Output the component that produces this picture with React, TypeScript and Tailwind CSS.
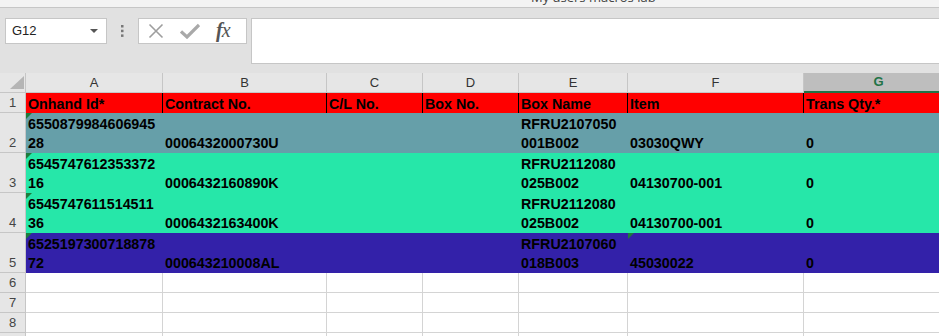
import React from 'react'

// column widths in px, right gridline included
const COLS = [
  { key: 'A', w: 137 },
  { key: 'B', w: 164 },
  { key: 'C', w: 96 },
  { key: 'D', w: 96 },
  { key: 'E', w: 109 },
  { key: 'F', w: 176 },
  { key: 'G', w: 161 },
]

const HEADERS = ['Onhand Id*', 'Contract No.', 'C/L No.', 'Box No.', 'Box Name', 'Item', 'Trans Qty.*']

type Row = { n: number; bg: string; cells: [string, string][]; flags: number[] }

const ROWS: Row[] = [
  {
    n: 2,
    bg: 'bg-[#669fa9]',
    cells: [['6550879984606945', '28'], ['', '0006432000730U'], ['', ''], ['', ''], ['RFRU2107050', '001B002'], ['', '03030QWY'], ['', '0']],
    flags: [0],
  },
  {
    n: 3,
    bg: 'bg-[#26e7a9]',
    cells: [['6545747612353372', '16'], ['', '0006432160890K'], ['', ''], ['', ''], ['RFRU2112080', '025B002'], ['', '04130700-001'], ['', '0']],
    flags: [0],
  },
  {
    n: 4,
    bg: 'bg-[#26e7a9]',
    cells: [['6545747611514511', '36'], ['', '0006432163400K'], ['', ''], ['', ''], ['RFRU2112080', '025B002'], ['', '04130700-001'], ['', '0']],
    flags: [0],
  },
  {
    n: 5,
    bg: 'bg-[#3321a9]',
    cells: [['6525197300718878', '72'], ['', '000643210008AL'], ['', ''], ['', ''], ['RFRU2107060', '018B003'], ['', '45030022'], ['', '0']],
    flags: [0, 5],
  },
]

function Flag() {
  return (
    <svg width="6" height="6" className="absolute left-0 top-0">
      <polygon points="0,0 6,0 0,6" fill="#1e7b3c" />
    </svg>
  )
}

function RowHead({ n, h }: { n: number | string; h: string }) {
  return (
    <div className={`w-[26px] ${h} shrink-0 bg-[#e6e6e6] border-r border-b border-[#c6c6c6] flex items-end justify-center pb-[1px] text-[13px] leading-[16px] text-[#444]`}>
      {n}
    </div>
  )
}

export default function App() {
  return (
    <div className="w-[939px] h-[336px] overflow-hidden bg-[#e1e1e1] font-['Liberation_Sans',Arial,sans-serif]">
      {/* title strip */}
      <div className="h-[8px] bg-[#f3f3f3] border-b border-[#c6c6c6] overflow-hidden relative">
        <span className="absolute left-[531px] top-[-10px] text-[13px] leading-[14px] text-[#444] font-['Open_Sans',sans-serif]">
          My users macros lab
        </span>
      </div>

      {/* formula bar */}
      <div className="h-[65px] flex items-start pt-[10px]">
        <div className="ml-[5px] w-[102px] h-[26px] bg-white border border-[#c6c6c6] flex items-center justify-between pl-[6px] pr-[8px] text-[13px] text-[#222]">
          <span>G12</span>
          <svg width="8" height="5" viewBox="0 0 8 5">
            <polygon points="0,0 8,0 4,4" fill="#555" />
          </svg>
        </div>
        <div className="w-[31px] h-[26px] flex items-center justify-center">
          <svg width="3" height="12" viewBox="0 0 3 12">
            <rect x="0" y="0" width="2.5" height="2.5" fill="#777" />
            <rect x="0" y="4.7" width="2.5" height="2.5" fill="#777" />
            <rect x="0" y="9.4" width="2.5" height="2.5" fill="#777" />
          </svg>
        </div>
        <div className="w-[109px] h-[26px] bg-white border border-[#c6c6c6] flex items-center pl-[9px] gap-[16px]">
          <svg width="16" height="16" viewBox="0 0 16 16">
            <path d="M1.5 1.5 L14.5 14.5 M14.5 1.5 L1.5 14.5" stroke="#9e9e9e" strokeWidth="1.6" fill="none" />
          </svg>
          <svg width="20" height="16" viewBox="0 0 20 16">
            <path d="M1 8.5 L7 14 L19 2" stroke="#a9a9a9" strokeWidth="3.2" fill="none" />
          </svg>
          <span className="text-[20px] leading-[20px] italic text-[#555] font-['Liberation_Serif',serif] tracking-[-1px] -mt-[2px]">
            <span className="font-bold">f</span>x
          </span>
        </div>
        <div className="ml-[4px] flex-1 h-[46px] bg-white border border-[#c6c6c6] border-r-0" />
      </div>

      {/* column headers */}
      <div className="flex h-[20px]">
        <div className="w-[26px] h-[20px] shrink-0 bg-[#e6e6e6] border-r border-b border-[#c6c6c6] relative">
          <svg width="14" height="14" className="absolute left-[10px] top-[3px]">
            <polygon points="14,0 14,13 0,13" fill="#b5b5b5" />
          </svg>
        </div>
        {COLS.map((c) =>
          c.key === 'G' ? (
            <div
              key={c.key}
              style={{ width: c.w }}
              className="h-[20px] shrink-0 bg-[#bebebe] border-b-2 border-[#217346] flex items-center justify-center pr-[12px] text-[13px] font-bold text-[#217346]"
            >
              G
            </div>
          ) : (
            <div
              key={c.key}
              style={{ width: c.w }}
              className="h-[20px] shrink-0 bg-[#e6e6e6] border-r border-b border-[#c6c6c6] flex items-center justify-center text-[13px] text-[#333]"
            >
              {c.key}
            </div>
          )
        )}
      </div>

      {/* row 1 */}
      <div className="flex h-[20px]">
        <RowHead n={1} h="h-[20px]" />
        {COLS.map((c, i) => (
          <div
            key={c.key}
            style={{ width: c.w }}
            className={`h-[20px] shrink-0 bg-[#ff0000] border-r ${i < 6 ? 'border-black' : 'border-[#ff0000]'} flex items-end pl-[2px] text-[14.3px] leading-[18px] font-bold text-black whitespace-nowrap overflow-hidden`}
          >
            {HEADERS[i]}
          </div>
        ))}
      </div>

      {/* data rows */}
      {ROWS.map((r) => (
        <div key={r.n} className="flex h-[40px]">
          <RowHead n={r.n} h="h-[40px]" />
          {COLS.map((c, i) => (
            <div
              key={c.key}
              style={{ width: c.w }}
              className={`relative h-[40px] shrink-0 ${r.bg} flex flex-col justify-end pl-[2px] text-[14.3px] leading-[19px] font-bold text-black whitespace-nowrap`}
            >
              {r.flags.includes(i) && <Flag />}
              <div>{r.cells[i][0] || '\u00a0'}</div>
              <div>{r.cells[i][1] || '\u00a0'}</div>
            </div>
          ))}
        </div>
      ))}

      {/* empty rows */}
      {[6, 7, 8, 0].map((n) => (
        <div key={n} className="flex h-[20px]">
          <RowHead n={n || ''} h="h-[20px]" />
          {COLS.map((c) => (
            <div key={c.key} style={{ width: c.w }} className="h-[20px] shrink-0 bg-white border-r border-b border-[#d4d4d4]" />
          ))}
        </div>
      ))}
    </div>
  )
}
